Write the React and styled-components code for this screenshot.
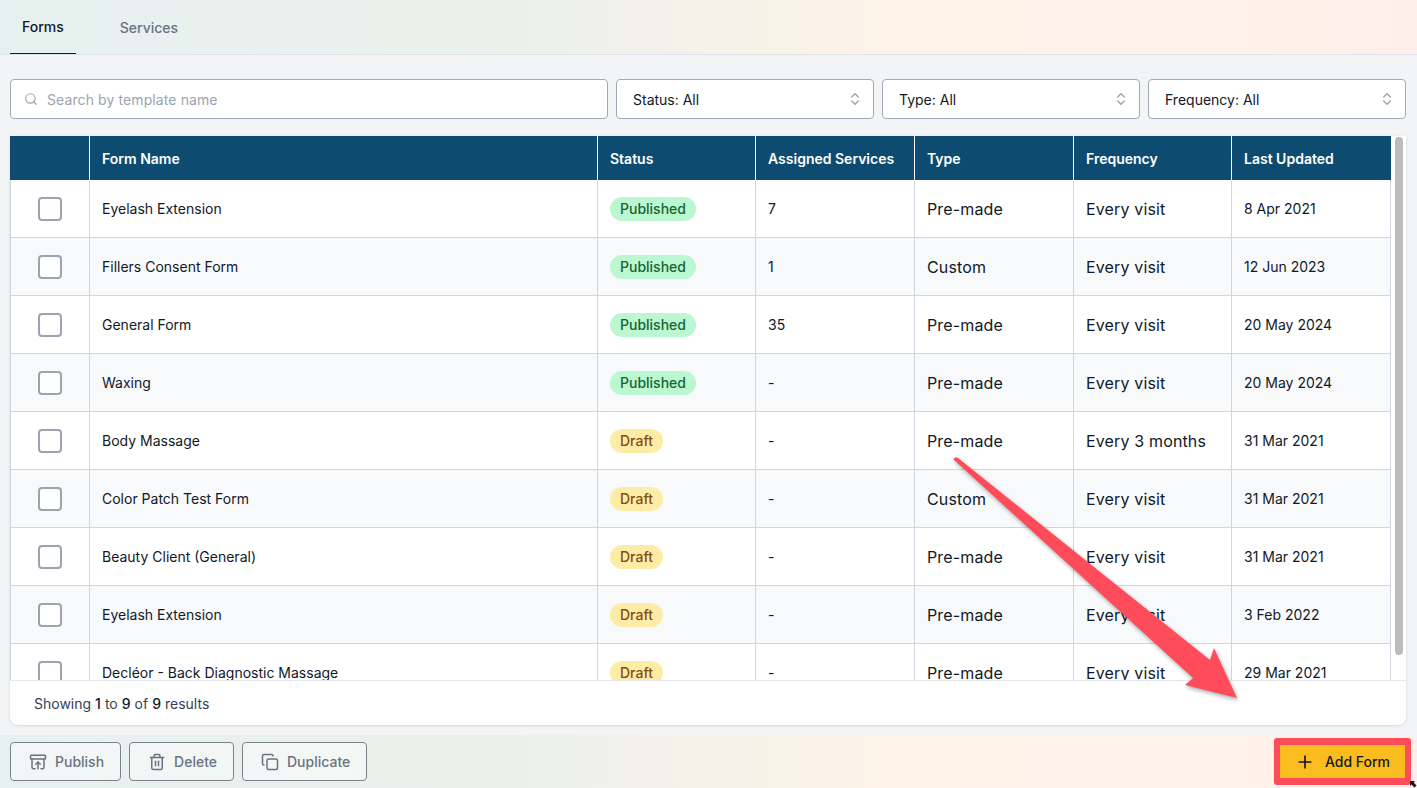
import React from "react";
import styled, { createGlobalStyle } from "styled-components";
import { Search, ChevronsUpDown, ArchiveRestore, Trash2, Copy, Plus } from "lucide-react";

const Global = createGlobalStyle`
  html, body { margin: 0; padding: 0; height: 100%; overflow: hidden; }
  body { font-family: Inter, "Liberation Sans", sans-serif; color: #111827; background: #f3f4f6; }
  #root { height: 100%; }
  * { box-sizing: border-box; }
`;

const Page = styled.div`
  position: relative;
  display: flex;
  flex-direction: column;
  height: 788px;
`;

const gradient = `linear-gradient(90deg, #e6f1ef 0%, #ebf0ec 35%, #fdf3e7 62%, #fff3e9 85%, #ffeeeb 100%)`;

const TabBar = styled.nav`
  display: flex;
  height: 55px;
  flex: none;
  padding-left: 10px;
  gap: 1px;
  background: ${gradient};
  border-bottom: 1px solid #dfe2e6;
`;

const Tab = styled.div`
  display: flex;
  align-items: center;
  height: 54px;
  padding: 0 12px 0 ${(p) => (p.$active ? "12px" : "43px")};
  font-size: 14px;
  font-weight: 500;
  color: ${(p) => (p.$active ? "#111827" : "#6b7280")};
  border-bottom: ${(p) => (p.$active ? "1px solid #111827" : "none")};
`;

const Main = styled.main`
  flex: 1;
  min-height: 0;
  display: flex;
  flex-direction: column;
  padding: 24px 11px 10px 10px;
  background: #f3f4f6;
`;

const Filters = styled.div`
  display: grid;
  grid-template-columns: 598px 258px 258px 258px;
  gap: 8px;
  height: 40px;
  margin-bottom: 17px;
  flex: none;
`;

const SearchBox = styled.label`
  display: flex;
  align-items: center;
  gap: 9px;
  padding: 0 13px;
  background: #fff;
  border: 1px solid #a3a8b5;
  border-radius: 4px;
  font-size: 14px;
  color: #9ca3af;
`;

const SearchInput = styled.input`
  flex: 1;
  border: none;
  outline: none;
  padding: 0;
  background: transparent;
  font: inherit;
  color: #111827;
  letter-spacing: 0.1px;
  &::placeholder { color: #9ca3af; opacity: 1; }
`;

const Select = styled.div`
  display: flex;
  align-items: center;
  justify-content: space-between;
  padding: 0 10px 0 16px;
  background: #fff;
  border: 1px solid #a3a8b5;
  border-radius: 4px;
  font-size: 14px;
  color: #111827;
  svg { color: #9ca3af; }
`;

const Card = styled.section`
  flex: 1;
  min-height: 0;
  display: flex;
  flex-direction: column;
  background: #fff;
  border-radius: 0 0 8px 8px;
  box-shadow: 0 1px 3px rgba(17, 24, 39, 0.12);
  overflow: hidden;
`;

const ScrollArea = styled.div`
  flex: 1;
  min-height: 0;
  display: flex;
  overflow: hidden;
`;

const TableWrap = styled.div`
  flex: none;
  width: 1381px;
  height: 100%;
  overflow: hidden;
`;

const Table = styled.table`
  width: 1381px;
  table-layout: fixed;
  border-collapse: separate;
  border-spacing: 0;
`;

const Th = styled.th`
  height: 44px;
  padding: 0 12px;
  background: #0d4c70;
  color: #fff;
  font-size: 14px;
  font-weight: 600;
  text-align: left;
  border-right: 1px solid #fff;
  &:last-child { border-right: 1px solid #0d4c70; }
`;

const Td = styled.td`
  height: 58px;
  padding: 0 12px;
  font-size: ${(p) => (p.$large ? "16px" : "14px")};
  letter-spacing: ${(p) => (p.$large ? "0.15px" : "0")};
  color: #111827;
  background: ${(p) => (p.$alt ? "#f8f9fb" : "#fff")};
  border-right: 1px solid #d1d5e0;
  border-bottom: 1px solid #d1d5e0;
  &:first-child { border-left: 1px solid #d1d5e0; }
`;

const CheckCell = styled(Td)`
  text-align: center;
  padding: 0;
`;

const Checkbox = styled.span`
  display: inline-block;
  width: 24px;
  height: 24px;
  vertical-align: middle;
  border: 2px solid #9ca3af;
  border-radius: 4px;
  background: #fff;
`;

const Badge = styled.span`
  display: inline-flex;
  align-items: center;
  height: 24px;
  padding: 0 10px;
  border-radius: 12px;
  font-size: 14px;
  font-weight: 500;
  background: ${(p) => (p.$status === "Published" ? "#bbf7d0" : "#fdeca6")};
  color: ${(p) => (p.$status === "Published" ? "#166534" : "#854d0e")};
`;

const ScrollTrack = styled.div`
  flex: 1;
  padding: 1px 3px 25px 4px;
  background: #fff;
`;

const ScrollThumb = styled.div`
  height: 518px;
  background: #bcbcbc;
  border-radius: 4px;
`;

const Summary = styled.footer`
  flex: none;
  height: 45px;
  display: flex;
  align-items: center;
  gap: 4px;
  padding: 0 24px;
  border-top: 1px solid #e5e7eb;
  font-size: 14px;
  color: #374151;
  b { font-weight: 500; color: #111827; }
`;

const ActionBar = styled.footer`
  flex: none;
  height: 53px;
  display: flex;
  align-items: center;
  justify-content: space-between;
  padding: 0 6px 0 10px;
  background: ${gradient};
`;

const ActionGroup = styled.div`
  display: flex;
  gap: 8px;
`;

const GhostButton = styled.button`
  display: flex;
  align-items: center;
  gap: 8px;
  height: 39px;
  padding: 0 16px 0 18px;
  background: rgba(255, 255, 255, 0.45);
  border: 1px solid #7b8289;
  border-radius: 4px;
  font: inherit;
  font-size: 14px;
  font-weight: 500;
  color: #6b7280;
`;

const AddButton = styled.button`
  display: flex;
  align-items: center;
  justify-content: center;
  gap: 10px;
  width: 137px;
  height: 47px;
  padding: 0;
  background: #fbbc1f;
  border: solid #ff4c5b;
  border-width: 7px 6px;
  border-radius: 3px;
  font: inherit;
  font-size: 14px;
  font-weight: 500;
  color: #111827;
`;

const Annotation = styled.svg`
  position: absolute;
  inset: 0;
  width: 1417px;
  height: 788px;
  pointer-events: none;
  filter: drop-shadow(1px 2px 2px rgba(0, 0, 0, 0.35));
`;

const ResizeCursor = styled.svg`
  position: absolute;
  right: 0;
  bottom: 0;
  width: 7px;
  height: 7px;
`;

const rows = [
  ["Eyelash Extension", "Published", "7", "Pre-made", "Every visit", "8 Apr 2021"],
  ["Fillers Consent Form", "Published", "1", "Custom", "Every visit", "12 Jun 2023"],
  ["General Form", "Published", "35", "Pre-made", "Every visit", "20 May 2024"],
  ["Waxing", "Published", "-", "Pre-made", "Every visit", "20 May 2024"],
  ["Body Massage", "Draft", "-", "Pre-made", "Every 3 months", "31 Mar 2021"],
  ["Color Patch Test Form", "Draft", "-", "Custom", "Every visit", "31 Mar 2021"],
  ["Beauty Client (General)", "Draft", "-", "Pre-made", "Every visit", "31 Mar 2021"],
  ["Eyelash Extension", "Draft", "-", "Pre-made", "Every visit", "3 Feb 2022"],
  ["Decléor - Back Diagnostic Massage", "Draft", "-", "Pre-made", "Every visit", "29 Mar 2021"],
];

const colWidths = [80, 508, 158, 159, 159, 158, 159];
const headers = ["", "Form Name", "Status", "Assigned Services", "Type", "Frequency", "Last Updated"];

export default function App() {
  return (
    <Page>
      <Global />
      <TabBar>
        <Tab $active>Forms</Tab>
        <Tab>Services</Tab>
      </TabBar>
      <Main>
        <Filters>
          <SearchBox>
            <Search size={14} />
            <SearchInput placeholder="Search by template name" />
          </SearchBox>
          <Select>Status: All<ChevronsUpDown size={16} /></Select>
          <Select>Type: All<ChevronsUpDown size={16} /></Select>
          <Select>Frequency: All<ChevronsUpDown size={16} /></Select>
        </Filters>
        <Card>
          <ScrollArea>
            <TableWrap>
              <Table>
                <colgroup>
                  {colWidths.map((w, i) => <col key={i} width={w} />)}
                </colgroup>
                <thead>
                  <tr>{headers.map((h, i) => <Th key={i}>{h}</Th>)}</tr>
                </thead>
                <tbody>
                  {rows.map((r, i) => {
                    const alt = i % 2 === 1;
                    return (
                      <tr key={i}>
                        <CheckCell $alt={alt}><Checkbox /></CheckCell>
                        <Td $alt={alt}>{r[0]}</Td>
                        <Td $alt={alt}><Badge $status={r[1]}>{r[1]}</Badge></Td>
                        <Td $alt={alt}>{r[2]}</Td>
                        <Td $alt={alt} $large>{r[3]}</Td>
                        <Td $alt={alt} $large>{r[4]}</Td>
                        <Td $alt={alt}>{r[5]}</Td>
                      </tr>
                    );
                  })}
                </tbody>
              </Table>
            </TableWrap>
            <ScrollTrack><ScrollThumb /></ScrollTrack>
          </ScrollArea>
          <Summary>Showing <b>1</b> to <b>9</b> of <b>9</b> results</Summary>
        </Card>
      </Main>
      <ActionBar>
        <ActionGroup>
          <GhostButton><ArchiveRestore size={18} />Publish</GhostButton>
          <GhostButton><Trash2 size={18} />Delete</GhostButton>
          <GhostButton><Copy size={18} />Duplicate</GhostButton>
        </ActionGroup>
        <AddButton><Plus size={20} color="#111827" />Add Form</AddButton>
      </ActionBar>
      <Annotation viewBox="0 0 1417 788">
        <path
          d="M953.5 459.5 Q955 456 958 458 L1210 660 L1214 648 L1237 698 L1185 685 L1193 678 L953.5 459.5 Z"
          fill="#ff4c5b"
        />
      </Annotation>
      <ResizeCursor viewBox="0 0 7 7">
        <path d="M0 0 L5 0 L3.6 1.4 L6.5 4.5 L4.5 6.5 L1.4 3.6 L0 5 Z" fill="#111" />
      </ResizeCursor>
    </Page>
  );
}
